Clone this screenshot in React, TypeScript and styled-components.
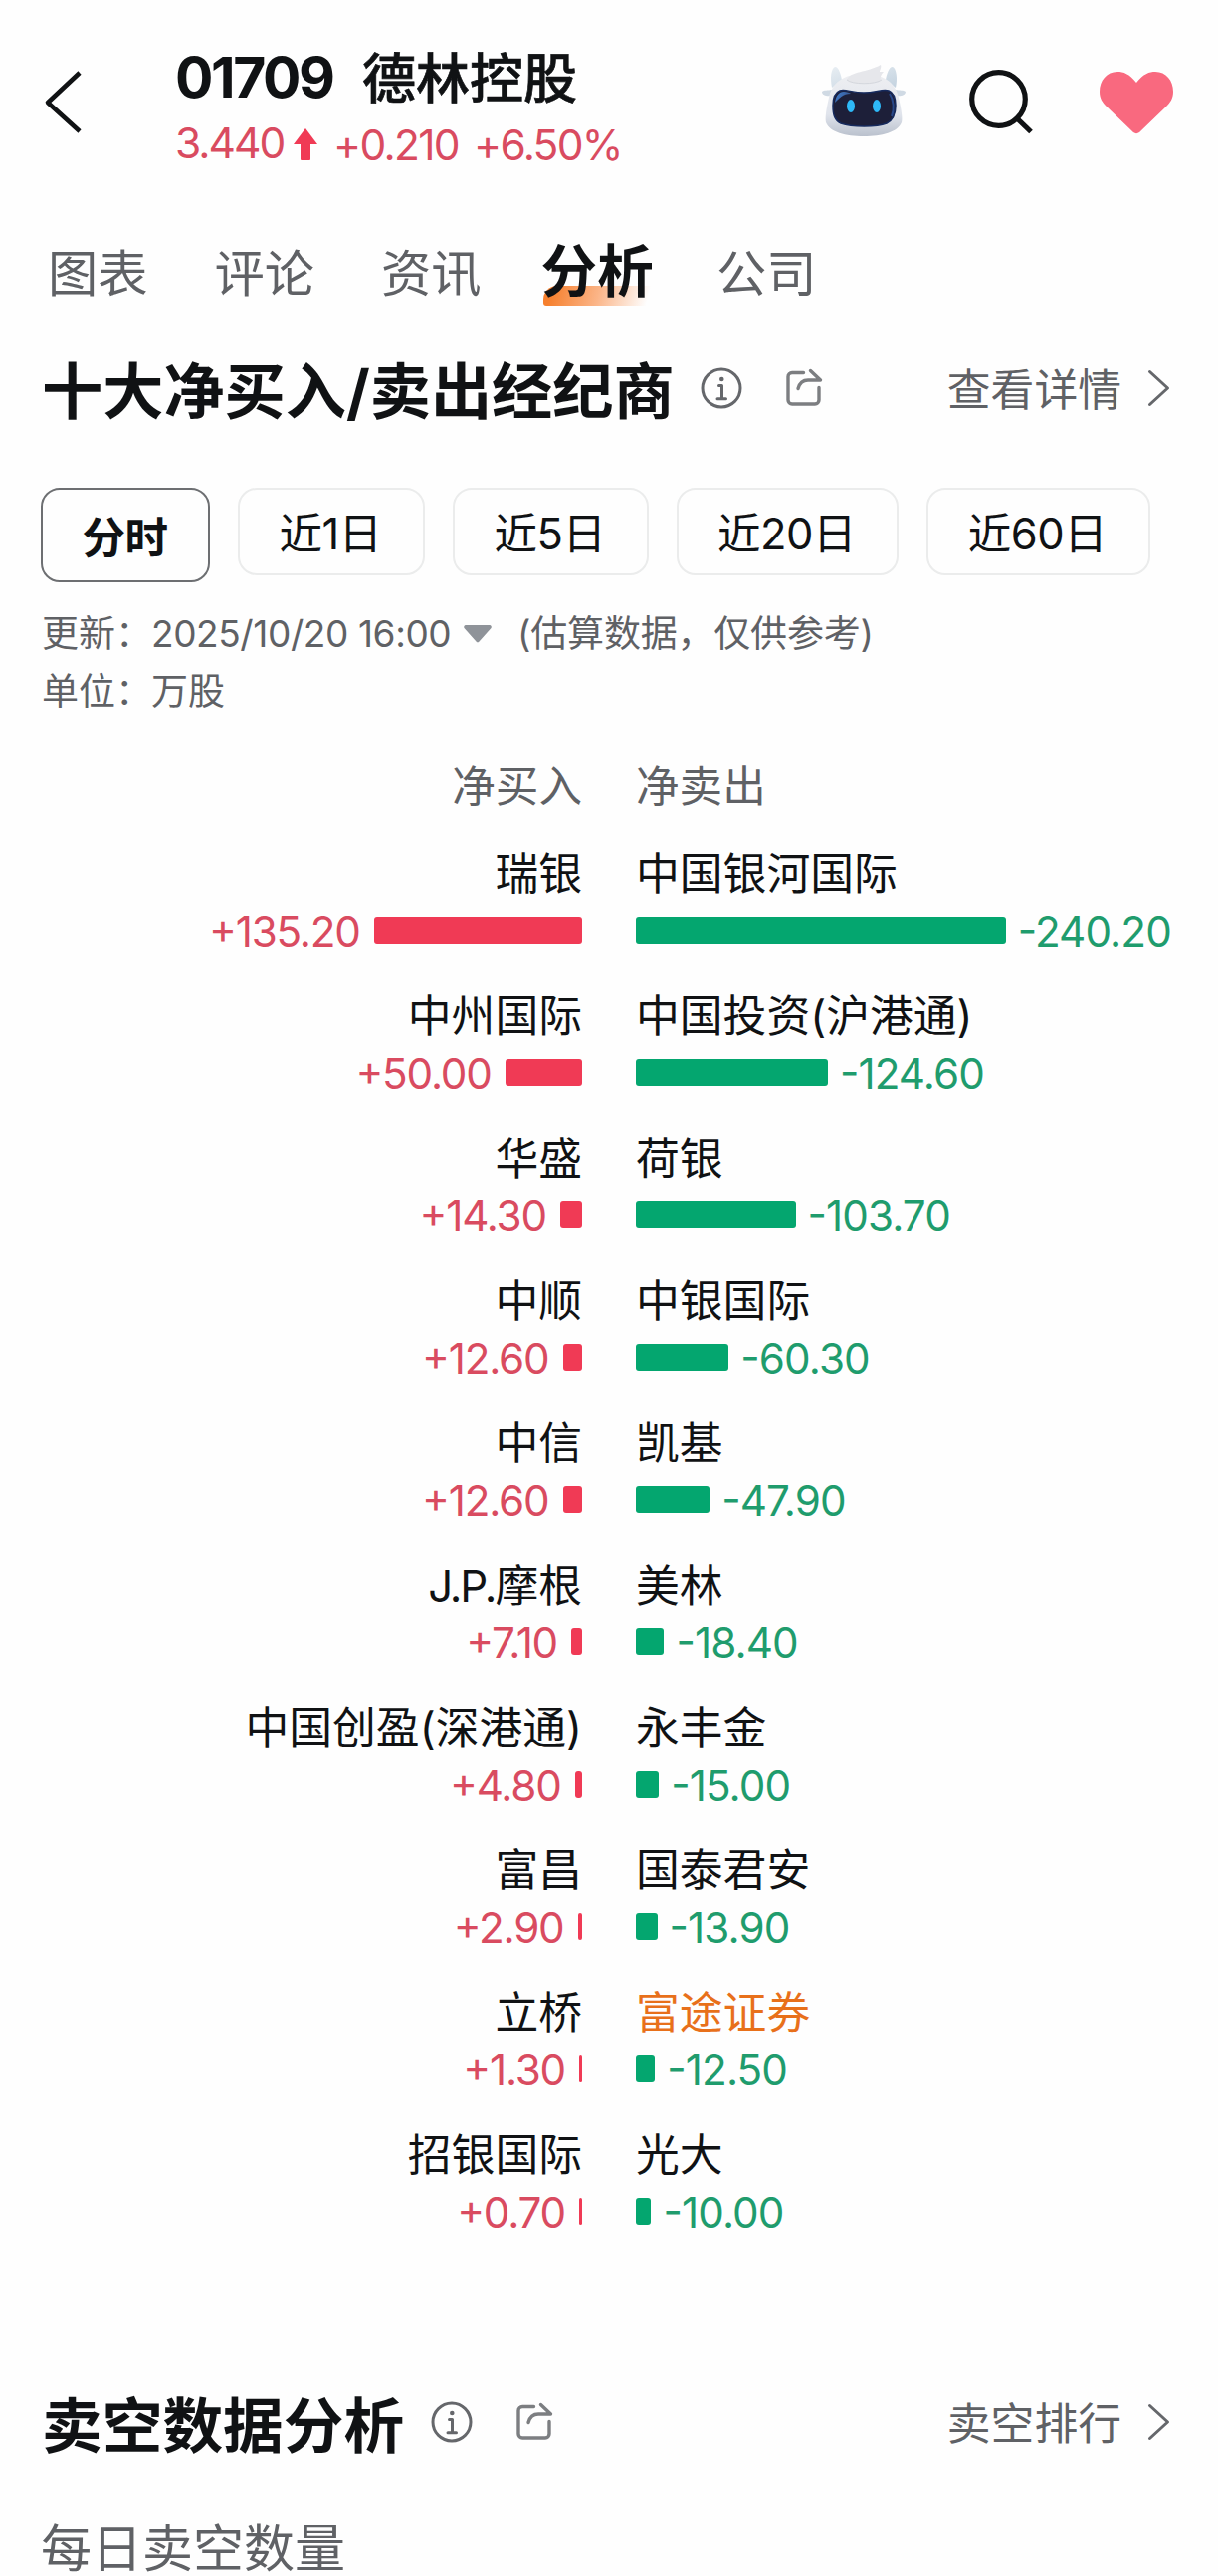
import React from "react";
import styled, { createGlobalStyle } from "styled-components";

const INK = "#101214";
const GREY = "#5f6165";
const RED = "#d94b60";
const RED_BAR = "#f03a55";
const GREEN = "#1f9c6d";
const GREEN_BAR = "#04a66f";

const GlobalStyle = createGlobalStyle`
  * { box-sizing: border-box; }
  body {
    margin: 0;
    background: #fefefe;
    color: ${INK};
    font-family: Inter, "Noto Sans CJK SC", sans-serif;
  }
`;

const Page = styled.main`
  width: 1224px;
  height: 2588px;
  overflow: hidden;
  display: flex;
  flex-direction: column;
  & > * {
    flex-shrink: 0;
  }
`;

const Header = styled.header`
  display: flex;
  height: 226px;
  padding: 48px 44px 0;
  align-items: flex-start;
`;

const BackIcon = styled.svg`
  width: 40px;
  height: 64px;
  margin-top: 22px;
`;

const Quote = styled.div`
  margin-left: 92px;
  flex: 1;
`;

const QuoteTitle = styled.h1`
  margin: 0;
  display: flex;
  gap: 30px;
  height: 60px;
  line-height: 60px;
  font-size: 54px;
  font-weight: 700;
`;

const Code = styled.span`
  font-size: 57px;
  font-weight: 650;
  letter-spacing: -2.4px;
  width: 158px;
  white-space: nowrap;
`;

const Name = styled.span`
  padding-top: 2px;
  font-weight: 500;
  -webkit-text-stroke: 0.7px ${INK};
`;

const QuoteChange = styled.div`
  display: flex;
  align-items: center;
  margin-top: 15px;
  height: 44px;
  line-height: 44px;
  font-size: 42.5px;
  letter-spacing: -1.7px;
  color: ${RED};
  white-space: nowrap;
`;

const Price = styled.span`
  width: 108px;
  margin-top: -2px;
  letter-spacing: -2px;
`;

const Change = styled.span<{ $w: number }>`
  width: ${(p) => p.$w}px;
  margin-top: 2px;
`;

const ArrowIcon = styled.svg`
  width: 24px;
  height: 32px;
  margin: 0 16px 0 11px;
`;

const Actions = styled.div`
  display: flex;
  align-items: center;
  height: 106px;
`;

const RobotIcon = styled.svg`
  width: 88px;
  height: 76px;
  margin-right: 62px;
`;

const SearchIcon = styled.svg`
  width: 66px;
  height: 66px;
  margin: 4px 64px 0 0;
`;

const HeartIcon = styled.svg`
  width: 76px;
  height: 64px;
  margin-top: 4px;
`;

const Tabs = styled.nav`
  display: flex;
  gap: 67.5px;
  height: 108px;
  padding: 15px 0 0 48px;
  font-size: 50.3px;
  line-height: 68px;
  color: ${GREY};
`;

const Tab = styled.span<{ $active?: boolean }>`
  position: relative;
  z-index: 0;
  width: ${(p) => (p.$active ? 109 : 100)}px;
  white-space: nowrap;
  ${(p) =>
    p.$active &&
    `
    font-size: 56.500px;
    font-weight: 700;
    color: ${INK};
    line-height: 64px;
    letter-spacing: 0.3px;
    margin-left: -7px;
    &::before {
      content: "";
      position: absolute;
      z-index: -1;
      left: 2px;
      top: 46px;
      width: 110px;
      height: 20px;
      border-top-left-radius: 14px;
      border-bottom-left-radius: 3px;
      background: linear-gradient(105deg, #f6802e 8%, #fbb588 50%, #fefefe 94%);
    }
  `}
`;

const SectionHead = styled.div`
  display: flex;
  align-items: center;
  height: 111px;
  margin-bottom: 5px;
  padding: 0 48px 0 42px;
`;

const SectionTitle = styled.h2<{ $w: number; $size?: number }>`
  margin: 8px 28px 0 0;
  width: ${(p) => p.$w}px;
  font-size: ${(p) => p.$size ?? 61.2}px;
  line-height: 80px;
  font-weight: 700;
  white-space: nowrap;
`;

const InfoSvg = styled.svg`
  width: 42px;
  height: 42px;
  margin-right: 43px;
`;

const ShareSvg = styled.svg`
  width: 38px;
  height: 38px;
  margin-top: -2px;
`;

const MoreLink = styled.a`
  margin-left: auto;
  display: flex;
  align-items: center;
  gap: 26px;
  font-size: 43.8px;
  line-height: 60px;
  color: ${GREY};
`;

const MoreText = styled.span`
  margin-top: 6px;
`;

const ChevronSvg = styled.svg`
  width: 23px;
  height: 38px;
`;

const Periods = styled.div`
  display: flex;
  align-items: flex-start;
  gap: 28px;
  padding: 40px 0 0 41px;
  height: 135px;
`;

const Period = styled.button<{ $w: number; $active?: boolean }>`
  width: ${(p) => p.$w}px;
  height: ${(p) => (p.$active ? 95 : 88)}px;
  padding: ${(p) => (p.$active ? "4px 1px 0 0" : "3px 2px 0 0")};
  border: 2px solid ${(p) => (p.$active ? "#6d6f72" : "#ebecec")};
  border-radius: 19px;
  background: transparent;
  color: ${INK};
  font-family: inherit;
  font-size: 43.5px;
  font-weight: ${(p) => (p.$active ? 700 : 400)};
  line-height: 60px;
  letter-spacing: -0.5px;
  white-space: nowrap;
`;

const Meta = styled.div`
  display: flex;
  flex-direction: column;
  padding: 23px 0 0 42px;
  height: 145px;
  font-size: 37px;
  color: ${GREY};
`;

const MetaRow = styled.div`
  display: flex;
  align-items: center;
  height: 58px;
  line-height: 58px;
  white-space: nowrap;
`;

const MetaLabel = styled.span`
  width: 110px;
`;

const MetaDate = styled.span`
  width: 300px;
  letter-spacing: -0.4px;
`;

const MetaNote = styled.span`
  letter-spacing: -0.2px;
`;

const CaretSvg = styled.svg`
  width: 28px;
  height: 18px;
  margin: 0 26px 0 14px;
`;

type Side = "buy" | "sell";

const Brokers = styled.section`
  display: grid;
  grid-template-columns: 585px 585px;
  column-gap: 54px;
  height: 1554px;
  align-content: start;
`;

const ColumnHead = styled.div<{ $side: Side }>`
  height: 116px;
  padding-top: 31px;
  line-height: 60px;
  font-size: 43.6px;
  color: ${GREY};
  text-align: ${(p) => (p.$side === "buy" ? "right" : "left")};
`;

const Cell = styled.div<{ $side: Side }>`
  height: 143px;
  display: flex;
  flex-direction: column;
  align-items: ${(p) => (p.$side === "buy" ? "flex-end" : "flex-start")};
`;

const Broker = styled.div<{ $highlight?: boolean }>`
  height: 60px;
  line-height: 65px;
  font-size: 43.8px;
  color: ${(p) => (p.$highlight ? "#e8701a" : INK)};
  white-space: nowrap;
`;

const Latin = styled.span`
  letter-spacing: -2px;
`;

const BarLine = styled.div<{ $side: Side }>`
  display: flex;
  flex-direction: ${(p) => (p.$side === "buy" ? "row-reverse" : "row")};
  align-items: center;
  gap: ${(p) => (p.$side === "buy" ? 14 : 12)}px;
  height: 57px;
`;

const Bar = styled.div<{ $side: Side }>`
  height: 27px;
  border-radius: 3px;
  background: ${(p) => (p.$side === "buy" ? RED_BAR : GREEN_BAR)};
`;

const Amount = styled.span<{ $side: Side }>`
  padding-top: 3px;
  font-size: 42.2px;
  line-height: 50px;
  letter-spacing: ${(p) => (p.$side === "buy" ? -1.2 : -0.9)}px;
  font-feature-settings: "case" 1;
  color: ${(p) => (p.$side === "buy" ? RED : GREEN)};
`;

const SubTitle = styled.h3`
  margin: 30px 0 0 41px;
  font-size: 51px;
  line-height: 76px;
  font-weight: 400;
  color: ${GREY};
`;

const buyers: [string, number][] = [
  ["瑞银", 135.2],
  ["中州国际", 50],
  ["华盛", 14.3],
  ["中顺", 12.6],
  ["中信", 12.6],
  ["J.P.摩根", 7.1],
  ["中国创盈(深港通)", 4.8],
  ["富昌", 2.9],
  ["立桥", 1.3],
  ["招银国际", 0.7],
];

const sellers: [string, number][] = [
  ["中国银河国际", 240.2],
  ["中国投资(沪港通)", 124.6],
  ["荷银", 103.7],
  ["中银国际", 60.3],
  ["凯基", 47.9],
  ["美林", 18.4],
  ["永丰金", 15],
  ["国泰君安", 13.9],
  ["富途证券", 12.5],
  ["光大", 10],
];

const UNIT = 1.548;

function BrokerCell({ side, name, value }: { side: Side; name: string; value: number }) {
  const latin = name.match(/^[A-Z.]+/)?.[0] ?? "";
  return (
    <Cell $side={side}>
      <Broker $highlight={name === "富途证券"}>
        {latin && <Latin>{latin}</Latin>}
        {name.slice(latin.length)}
      </Broker>
      <BarLine $side={side}>
        <Bar $side={side} style={{ width: Math.max(3, value * UNIT) }} />
        <Amount $side={side}>
          {side === "buy" ? "+" : "-"}
          {value.toFixed(2)}
        </Amount>
      </BarLine>
    </Cell>
  );
}

function Info() {
  return (
    <InfoSvg viewBox="0 0 42 42" fill="none" stroke="#65676b" strokeWidth="3" strokeLinecap="round" strokeLinejoin="round">
      <circle cx="21" cy="21" r="19" />
      <circle cx="21.3" cy="12" r="2.3" fill="#65676b" stroke="none" />
      <path d="M18.5 18.5h3v13M17 31.7h8.5" />
    </InfoSvg>
  );
}

function Share() {
  return (
    <ShareSvg viewBox="0 0 38 38" fill="none" stroke="#7c7e81" strokeWidth="3.4" strokeLinecap="round" strokeLinejoin="round">
      <path d="M18.5 4.5H7a4 4 0 0 0-4 4V32a4 4 0 0 0 4 4h23a4 4 0 0 0 4-4V19.5" />
      <path d="M13 20.5C14.5 15 18 12 23 12H35.5L25.5 2.5" />
    </ShareSvg>
  );
}

function More({ children }: { children: React.ReactNode }) {
  return (
    <MoreLink>
      <MoreText>{children}</MoreText>
      <ChevronSvg viewBox="0 0 23 38" fill="none" stroke="#65676b" strokeWidth="3" strokeLinecap="round">
        <path d="M2.5 2.5 20.5 19 2.5 35.5" strokeLinejoin="round" />
      </ChevronSvg>
    </MoreLink>
  );
}

function Robot() {
  return (
    <RobotIcon viewBox="0 0 88 76">
      <defs>
        <linearGradient id="shell" x1="0" y1="0" x2="0" y2="1">
          <stop offset="0" stopColor="#eeeff2" />
          <stop offset="0.65" stopColor="#e0e4ec" />
          <stop offset="1" stopColor="#bac1cd" />
        </linearGradient>
        <linearGradient id="horn" x1="0" y1="0" x2="1" y2="1">
          <stop offset="0" stopColor="#e8eef3" />
          <stop offset="1" stopColor="#c3d2df" />
        </linearGradient>
        <linearGradient id="glint" x1="0" y1="0" x2="1" y2="0.4">
          <stop offset="0" stopColor="#3e7fd0" />
          <stop offset="1" stopColor="#39558f" />
        </linearGradient>
      </defs>
      <path d="M12 25C10 15 11 6 15 4c4 0 6 8 7 13zM76 25c2-9 1-19-3-21-4 0-6 8-7 13z" fill="url(#horn)" />
      <path d="M12 27c-4 1-8 0-10 2 0 4 6 5 9 4zM76 27c4 1 8 0 10 2 0 4-6 5-9 4z" fill="#d0dae4" />
      <path d="M44 11C24 11 12 20 9 35 6 48 5 56 6 60c4 10 20 14 38 14s34-4 38-14c1-4 0-12-3-25C76 20 64 11 44 11z" fill="url(#shell)" />
      <path d="M27 17C31 8 47 10 61 2c1 3-1 5-1 7h4c-3 3-4 6-3 8-4 5-28 5-34 0z" fill="#e6e7eb" />
      <path d="M27 17c5 5 29 5 35 0" fill="none" stroke="#d4d7dd" strokeWidth="1" />
      <path d="M20 28c5-2 12 2 24 2s19-4 25-2c5 2 7 8 7 15 0 10-3 15-9 18-10 4-35 4-46 0-6-3-8-8-8-18 0-7 2-13 7-15z" fill="#1d1f39" stroke="#162a5d" strokeWidth="1.5" />
      <path d="M15 40c1-7 4-11 9-11 3 0 6 1 7 2-8 0-12 5-16 9z" fill="url(#glint)" />
      <path d="M70 31c4 6 5 16 2 23" fill="none" stroke="#27488a" strokeWidth="2" />
      <ellipse cx="31" cy="43.5" rx="4" ry="6.5" fill="#2eb9f8" />
      <ellipse cx="57" cy="43.5" rx="4" ry="6.5" fill="#2eb9f8" />
    </RobotIcon>
  );
}

const SpacedHead = styled(SectionHead)`
  margin-top: 93px;
`;

export default function App() {
  return (
    <Page>
      <GlobalStyle />
      <Header>
        <BackIcon viewBox="0 0 40 64" fill="none" stroke={INK} strokeWidth="4.6" strokeLinejoin="round">
          <path d="M36 3 4 33 36 62" />
        </BackIcon>
        <Quote>
          <QuoteTitle>
            <Code>01709</Code>
            <Name>德林控股</Name>
          </QuoteTitle>
          <QuoteChange>
            <Price>3.440</Price>
            <ArrowIcon viewBox="0 0 24 32">
              <path d="M12 0 24 16h-7v15a1 1 0 0 1-1 1H8a1 1 0 0 1-1-1V16H0z" fill="#f03a55" />
            </ArrowIcon>
            <Change $w={141}>+0.210</Change>
            <Change $w={150}>+6.50%</Change>
          </QuoteChange>
        </Quote>
        <Actions>
          <Robot />
          <SearchIcon viewBox="0 0 66 66" fill="none" stroke={INK} strokeWidth="5.2">
            <circle cx="29.5" cy="29.5" r="26.8" />
            <path d="M48 49 62 62.5" />
          </SearchIcon>
          <HeartIcon viewBox="0 0 76 64">
            <path d="M38 12C31 3 25 1 19 1 8 1 1 10 1 21c0 7 3 11 7 15l27 26c2 1.5 4 1.5 6 0l27-26c4-4 7-8 7-15C75 10 68 1 57 1c-6 0-12 2-19 11z" fill="#f9697f" />
          </HeartIcon>
        </Actions>
      </Header>
      <Tabs>
        <Tab>图表</Tab>
        <Tab>评论</Tab>
        <Tab>资讯</Tab>
        <Tab $active>分析</Tab>
        <Tab>公司</Tab>
      </Tabs>
      <SectionHead>
        <SectionTitle $w={634}>十大净买入/卖出经纪商</SectionTitle>
        <Info />
        <Share />
        <More>查看详情</More>
      </SectionHead>
      <Periods>
        <Period $w={170} $active>分时</Period>
        <Period $w={188}>近1日</Period>
        <Period $w={197}>近5日</Period>
        <Period $w={223}>近20日</Period>
        <Period $w={225}>近60日</Period>
      </Periods>
      <Meta>
        <MetaRow>
          <MetaLabel>更新：</MetaLabel>
          <MetaDate>2025/10/20 16:00</MetaDate>
          <CaretSvg viewBox="0 0 28 18">
            <path d="M2 0h24a2 2 0 0 1 1.5 3L15.500 16.500a2 2 0 0 1-3 0L.5 3A2 2 0 0 1 2 0z" fill="#8f9399" />
          </CaretSvg>
          <MetaNote>(估算数据，仅供参考)</MetaNote>
        </MetaRow>
        <MetaRow>
          <MetaLabel>单位：</MetaLabel>
          <span>万股</span>
        </MetaRow>
      </Meta>
      <Brokers>
        <ColumnHead $side="buy">净买入</ColumnHead>
        <ColumnHead $side="sell">净卖出</ColumnHead>
        {buyers.map(([name, value], i) => (
          <React.Fragment key={name}>
            <BrokerCell side="buy" name={name} value={value} />
            <BrokerCell side="sell" name={sellers[i][0]} value={sellers[i][1]} />
          </React.Fragment>
        ))}
      </Brokers>
      <SpacedHead>
        <SectionTitle $w={363} $size={60.7}>卖空数据分析</SectionTitle>
        <Info />
        <Share />
        <More>卖空排行</More>
      </SpacedHead>
      <SubTitle>每日卖空数量</SubTitle>
    </Page>
  );
}
